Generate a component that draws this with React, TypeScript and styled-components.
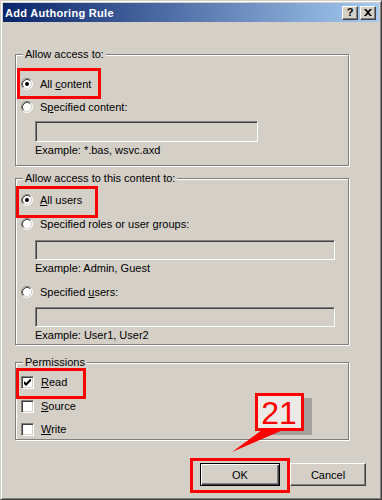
import React from 'react';
import styled, { createGlobalStyle } from 'styled-components';

const Global = createGlobalStyle`
  html, body { margin: 0; padding: 0; background: #d4d0c8; }
  body {
    font-family: "Liberation Sans", Arial, sans-serif;
    font-size: 11px;
    color: #000;
  }
`;

const Window = styled.div`
  position: relative;
  width: 382px;
  height: 500px;
  box-sizing: border-box;
  padding: 2px;
  border: 1px solid;
  border-color: #d4d0c8 #404040 #404040 #d4d0c8;
  box-shadow: inset 1px 1px #fff, inset -1px -1px #808080;
  background: #d4d0c8;
  overflow: hidden;
`;

const TitleBar = styled.div`
  display: flex;
  align-items: center;
  height: 19px;
  padding: 0 3px 0 2px;
  background: linear-gradient(to right, #0a246a, #a6caf0);
`;

const TitleText = styled.div`
  flex: 1;
  color: #fff;
  font-weight: bold;
  font-size: 11px;
  letter-spacing: 0.3px;
`;

const CaptionButtons = styled.div`
  display: flex;
  gap: 2px;
`;

const CaptionButton = styled.div`
  display: flex;
  align-items: center;
  justify-content: center;
  width: 16px;
  height: 14px;
  box-sizing: border-box;
  background: #d4d0c8;
  border: 1px solid;
  border-color: #fff #404040 #404040 #fff;
  box-shadow: inset -1px -1px #808080;
  font-weight: bold;
  font-size: 11px;
  line-height: 1;
`;

const Body = styled.div`
  padding: 26px 30px 0 12px;
`;

const Group = styled.fieldset<{ $top: number; $bottom: number }>`
  margin: ${p => p.$top}px 0 0;
  padding: 0 0 ${p => p.$bottom}px 5px;
  min-width: 0;
  border: 1px solid #808080;
  box-shadow: inset 1px 1px #fff, 1px 1px #fff;
`;

const Legend = styled.legend`
  margin-left: 2px;
  padding: 0 2px;
  line-height: 13px;
  background: #d4d0c8;
`;

type Mark = [number, number, number, number];

const Option = styled.div<{ $top: number; $mark?: Mark }>`
  position: relative;
  display: flex;
  align-items: center;
  gap: 7px;
  height: 16px;
  margin-top: ${p => p.$top}px;
  line-height: 13px;
  ${p =>
    p.$mark &&
    `&::after {
      content: '';
      position: absolute;
      left: ${p.$mark[0]}px;
      top: ${p.$mark[1]}px;
      width: ${p.$mark[2]}px;
      height: ${p.$mark[3]}px;
      box-sizing: border-box;
      border: 3px solid #ff0000;
    }`}
`;

const Field = styled.input<{ $top: number; $w: number; $h: number }>`
  display: block;
  width: ${p => p.$w}px;
  height: ${p => p.$h}px;
  margin: ${p => p.$top}px 0 0 14px;
  padding: 0;
  box-sizing: border-box;
  border: 1px solid;
  border-color: #808080 #fff #fff #808080;
  box-shadow: inset 1px 1px #404040, inset -1px -1px #d4d0c8;
  background: #d4d0c8;
  outline: none;
`;

const Hint = styled.div`
  margin: 2px 0 0 14px;
  line-height: 13px;
`;

const RadioSvg = styled.svg`
  flex: none;
  display: block;
`;

const CheckBox = styled.span`
  flex: none;
  display: flex;
  align-items: center;
  justify-content: center;
  width: 13px;
  height: 13px;
  box-sizing: border-box;
  border: 1px solid;
  border-color: #808080 #fff #fff #808080;
  box-shadow: inset 1px 1px #404040, inset -1px -1px #d4d0c8;
  background: #fff;
`;

const Actions = styled.div`
  display: flex;
  justify-content: flex-end;
  gap: 10px;
  margin-top: 23px;
  padding-right: 13px;
`;

const Button = styled.button<{ $w: number; $default?: boolean }>`
  position: relative;
  width: ${p => p.$w}px;
  height: 23px;
  padding: 0;
  box-sizing: border-box;
  font-family: "Liberation Sans", Arial, sans-serif;
  font-size: 11px;
  color: #000;
  background: #d4d0c8;
  border: 1px solid;
  border-color: ${p => (p.$default ? '#000' : '#fff #404040 #404040 #fff')};
  box-shadow: ${p =>
    p.$default
      ? 'inset 1px 1px #fff, inset -1px -1px #404040, inset -2px -2px #808080'
      : 'inset -1px -1px #808080'};
  &::after {
    content: '';
    display: ${p => (p.$default ? 'block' : 'none')};
    position: absolute;
    left: -11px;
    top: -6px;
    width: 100px;
    height: 35px;
    box-sizing: border-box;
    border: 3px solid #ff0000;
  }
`;

const Callout = styled.svg`
  position: absolute;
  left: 224px;
  top: 385px;
`;

const Radio = ({ on }: { on?: boolean }) => (
  <RadioSvg width="12" height="12" viewBox="0 0 12 12">
    <circle cx="6" cy="6" r="5" fill="#fff" />
    <path d="M2.11 9.89 A5.5 5.5 0 0 1 9.89 2.11" stroke="#808080" fill="none" />
    <path d="M9.89 2.11 A5.5 5.5 0 0 1 2.11 9.89" stroke="#fff" fill="none" />
    <path d="M2.82 9.18 A4.5 4.5 0 0 1 9.18 2.82" stroke="#404040" fill="none" />
    <path d="M9.18 2.82 A4.5 4.5 0 0 1 2.82 9.18" stroke="#d4d0c8" fill="none" />
    {on && <circle cx="6" cy="6" r="2" fill="#000" />}
  </RadioSvg>
);

const Check = ({ on }: { on?: boolean }) => (
  <CheckBox>
    {on && (
      <svg width="7" height="7" viewBox="0 0 7 7">
        <polygon points="0,2 2,4 7,-1 7,2 2,7 0,5" fill="#000" />
      </svg>
    )}
  </CheckBox>
);

const App: React.FC = () => {
  return (
    <Window>
      <Global />
      <TitleBar>
        <TitleText>Add Authoring Rule</TitleText>
        <CaptionButtons>
          <CaptionButton>?</CaptionButton>
          <CaptionButton>
            <svg width="8" height="7" viewBox="0 0 8 7">
              <path d="M0 0 L2 0 L4 2 L6 0 L8 0 L5 3.5 L8 7 L6 7 L4 5 L2 7 L0 7 L3 3.5 Z" fill="#000" />
            </svg>
          </CaptionButton>
        </CaptionButtons>
      </TitleBar>

      <Body>
        <Group $top={0} $bottom={8}>
          <Legend>Allow access to:</Legend>
          <Option $top={15} $mark={[-4, -8, 84, 31]}>
            <Radio on />
            <span>All <u>c</u>ontent</span>
          </Option>
          <Option $top={7}>
            <Radio />
            <span>S<u>p</u>ecified content:</span>
          </Option>
          <Field $top={6} $w={223} $h={21} disabled />
          <Hint>Example: *.bas, wsvc.axd</Hint>
        </Group>

        <Group $top={6} $bottom={2}>
          <Legend>Allow access to this content to:</Legend>
          <Option $top={7} $mark={[-5, -6, 82, 32]}>
            <Radio on />
            <span><u>A</u>ll users</span>
          </Option>
          <Option $top={8}>
            <Radio />
            <span>Specified roles or user <u>g</u>roups:</span>
          </Option>
          <Field $top={8} $w={300} $h={20} disabled />
          <Hint>Example: Admin, Guest</Hint>
          <Option $top={9}>
            <Radio />
            <span>Specified <u>u</u>sers:</span>
          </Option>
          <Field $top={7} $w={300} $h={20} disabled />
          <Hint>Example: User1, User2</Hint>
        </Group>

        <Group $top={11} $bottom={2}>
          <Legend>Permissions</Legend>
          <Option $top={5} $mark={[-5, -6, 70, 31]}>
            <Check on />
            <span><u>R</u>ead</span>
          </Option>
          <Option $top={8}>
            <Check />
            <span><u>S</u>ource</span>
          </Option>
          <Option $top={7}>
            <Check />
            <span><u>W</u>rite</span>
          </Option>
        </Group>
      </Body>

      <Actions>
        <Button $w={80} $default>OK</Button>
        <Button $w={76}>Cancel</Button>
      </Actions>

      <Callout width="95" height="70" viewBox="0 0 95 70">
        <rect x="37" y="12" width="50" height="37" fill="#a4a29e" />
        <rect x="31.5" y="8.5" width="46" height="35" fill="#eceae6" stroke="#ff0000" strokeWidth="3" />
        <polygon points="37,44 58,44 7,66" fill="#ff0000" />
        <text
          x="54"
          y="38"
          textAnchor="middle"
          fontFamily="Liberation Sans, Arial, sans-serif"
          fontSize="32"
          fill="#ff0000"
        >
          21
        </text>
      </Callout>
    </Window>
  );
};

export default App;
